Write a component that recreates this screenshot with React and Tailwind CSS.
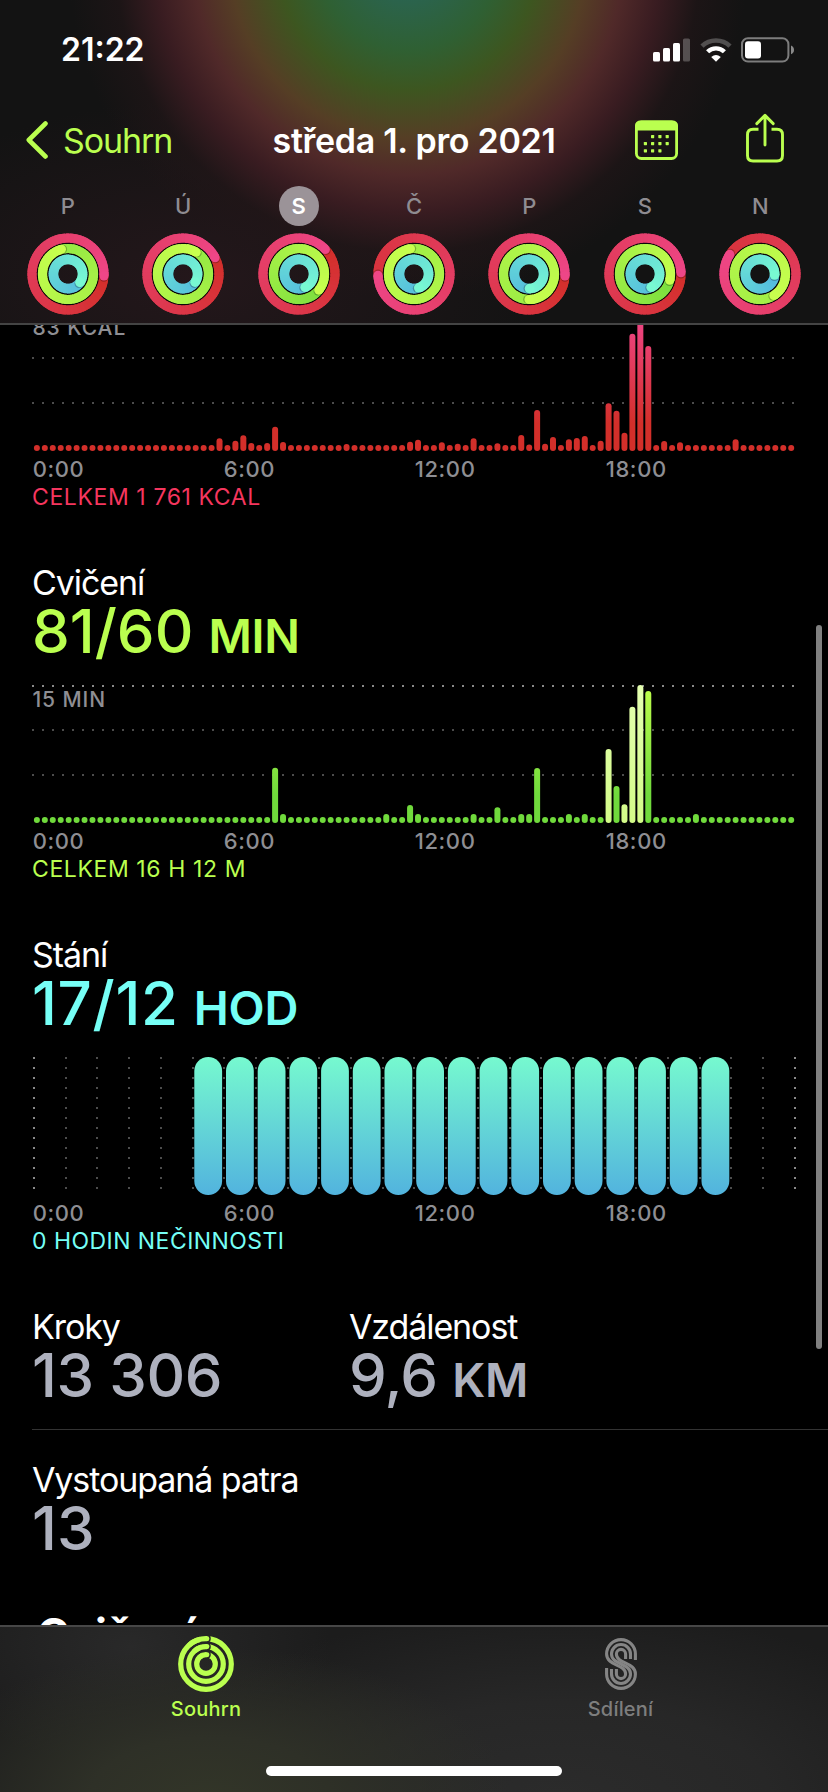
const BAR_COUNT = 96;
const BAR_STEP = 7.94;
const HOURS = ['0:00', '6:00', '12:00', '18:00'];

// quarter-hour index -> bar height, everything else is a resting dot
const MOVE = {
    23: 12.7, 25: 10.3, 26: 15.7, 27: 8, 29: 8, 30: 24.3, 31: 9, 39: 7, 47: 9.3, 48: 11.3,
    51: 8.7, 53: 7.3, 55: 12.7, 58: 7.7, 61: 16, 62: 6.5, 63: 41, 64: 7.3, 65: 14, 67: 11.7,
    68: 13, 69: 15, 71: 10.3, 72: 47.7, 73: 40.3, 74: 18.3, 75: 117.3, 76: 138, 77: 105,
    79: 10, 81: 8.7, 88: 11.7,
};

const EXERCISE = {
    30: 55.3, 31: 9, 44: 9, 47: 18, 48: 9, 55: 9, 58: 15.7, 61: 9, 62: 9, 63: 55, 67: 9, 69: 9,
    72: 74, 73: 37, 74: 18.7, 75: 116.3, 76: 138, 77: 132, 83: 9,
};

const WORKOUT = [72, 74, 75, 76];

const RED = [[211, 47, 42], [238, 70, 135]];
const GREEN = [[122, 222, 62], [200, 255, 78]];
const BLUE = [[82, 184, 222], [120, 249, 210]];

// every ring is [head angle, how far into the gradient the visible tail starts]
const WEEK = [
    { day: 'P', move: [93, 0], exercise: [345, 0.35], stand: [125, 0.1] },
    { day: 'Ú', move: [63, 0], exercise: [31, 0.35], stand: [124, 0.1] },
    { day: 'S', move: [47, 0], exercise: [129, 0.05], stand: [155, 0.1], selected: true },
    { day: 'Č', move: [268, 0.2], exercise: [352, 0.5], stand: [161, 0.1] },
    { day: 'P', move: [93, 0], exercise: [180, 0.45], stand: [178, 0.1] },
    { day: 'S', move: [88, 0], exercise: [104, 0], stand: [155, 0.1] },
    { day: 'N', move: [303, 0.2], exercise: [147, 0.5], stand: [94, 0] },
];

const mix = ([a, b], t) => `rgb(${a.map((v, i) => Math.round(v + (b[i] - v) * t)).join(',')})`;

const polar = (r, deg) => {
    const rad = (deg * Math.PI) / 180;
    return [r * Math.sin(rad), -r * Math.cos(rad)];
};

const arc = (r, from, to) => {
    const [x1, y1] = polar(r, from);
    const [x2, y2] = polar(r, to);
    return `M${x1} ${y1}A${r} ${r} 0 ${to - from > 180 ? 1 : 0} 1 ${x2} ${y2}`;
};

const Ring = ({ r, width, colors, head, start }) => {
    const segments = 60;
    const step = 360 / segments;
    const [sx, sy] = polar(r, head + 80 / r);
    const [hx, hy] = polar(r, head);
    return (
        <g fill="none" strokeWidth={width}>
            {Array.from({ length: segments }, (_, i) => (
                <path
                    key={i}
                    d={arc(r, head + i * step, head + (i + 1) * step + (i < segments - 1 ? 5 : 0))}
                    stroke={mix(colors, start + ((1 - start) * i) / segments)}
                />
            ))}
            <circle cx={sx} cy={sy} r={width / 2 - 0.2} fill="#000" fillOpacity="0.25" />
            <circle cx={hx} cy={hy} r={width / 2} fill={mix(colors, 1)} />
        </g>
    );
};

const ActivityRings = ({ move, exercise, stand }) => (
    <svg className="w-[82px] h-[82px]" viewBox="-41 -41 82 82">
        <circle r="31" fill="none" stroke="#0c0709" strokeWidth="2" />
        <circle r="20.3" fill="none" stroke="#0c0709" strokeWidth="2" />
        <Ring r={36} width={9.2} colors={RED} head={move[0]} start={move[1]} />
        <Ring r={25.5} width={9.2} colors={GREEN} head={exercise[0]} start={exercise[1]} />
        <Ring r={14.6} width={9.6} colors={BLUE} head={stand[0]} start={stand[1]} />
    </svg>
);

const StatusBar = () => (
    <div className="flex h-[99px] items-center justify-between pl-[61px] pr-[34px]">
        <span className="text-[32px] font-semibold">21:22</span>
        <div className="flex items-center gap-[10px]">
            <svg className="w-[37px] h-[24px]" viewBox="0 0 37 24" fill="#fff">
                <rect x="0" y="14" width="7" height="9.5" rx="1.6" />
                <rect x="10" y="10" width="7" height="13.5" rx="1.6" />
                <rect x="20" y="5" width="7" height="18.5" rx="1.6" />
                <rect x="30" y="0.5" width="7" height="23" rx="1.6" fillOpacity="0.25" />
            </svg>
            <svg className="w-[32px] h-[24px]" viewBox="0 0 32 24" fill="none" stroke="#fff">
                <path d="M2 8.2A20 20 0 0 1 30 8.2" strokeWidth="4.6" strokeOpacity="0.25" />
                <path d="M7.6 13.8A12 12 0 0 1 24.4 13.8" strokeWidth="4.4" />
                <path d="M16 23.8L11.2 19Q16 15 20.8 19Z" fill="#fff" stroke="none" />
            </svg>
            <svg className="w-[53px] h-[26px] -ml-px" viewBox="0 0 53 26" fill="none">
                <rect x="1" y="1.2" width="46.4" height="23.4" rx="6" stroke="#fff" strokeOpacity="0.45" strokeWidth="2" />
                <rect x="4" y="4.3" width="16" height="17.2" rx="3" fill="#fff" />
                <path d="M50 8.6Q53 10 53 13T50 17.2Z" fill="#fff" fillOpacity="0.5" />
            </svg>
        </div>
    </div>
);

const NavBar = () => (
    <nav className="grid h-[82px] grid-cols-[1fr_auto_1fr] items-center">
        <div className="flex items-center gap-[15px] pl-[26px] text-[#baff4f]">
            <svg className="w-[22px] h-[40px]" viewBox="0 0 22 40" fill="none" stroke="currentColor" strokeWidth="4.6" strokeLinecap="round" strokeLinejoin="round">
                <path d="M19.5 3.5L2.8 20L19.5 36.5" />
            </svg>
            <span className="text-[34px] tracking-[-1.1px]">Souhrn</span>
        </div>
        <h1 className="text-[34px] font-semibold tracking-[-0.3px] whitespace-nowrap">středa 1. pro 2021</h1>
        <div className="flex items-center justify-end gap-[68px] pr-[44px] text-[#baff4f]">
            <svg className="w-[43px] h-[40px]" viewBox="0 0 43 40" fill="none">
                <rect x="1.4" y="1.9" width="40.2" height="36.6" rx="5" stroke="currentColor" strokeWidth="2.8" />
                <path d="M0 10.5V6Q0 .5 6 .5H37Q43 .5 43 6V10.5Z" fill="currentColor" />
                <g fill="currentColor">
                    {[[16, 15], [23.3, 15], [30.6, 15], [8.8, 22], [16, 22], [23.3, 22], [30.6, 22], [8.8, 29.2], [16, 29.2], [23.3, 29.2]].map(([x, y]) => (
                        <rect key={`${x}-${y}`} x={x} y={y} width="3.2" height="3.2" rx="0.6" />
                    ))}
                </g>
            </svg>
            <svg className="w-[38px] h-[50px] -mt-1" viewBox="0 0 38 50" fill="none" stroke="currentColor" strokeWidth="2.9" strokeLinecap="round" strokeLinejoin="round">
                <path d="M12.5 16.3H7Q1.5 16.3 1.5 21.8V42.5Q1.5 48 7 48H31Q36.5 48 36.5 42.5V21.8Q36.5 16.3 31 16.3H25.5" strokeLinecap="butt" />
                <path d="M19 32V3M10.8 10.6L19 2.4L27.2 10.6" />
            </svg>
        </div>
    </nav>
);

const WeekStrip = () => (
    <div className="grid grid-cols-7 pl-[10px] pr-[10px] pt-[5px]">
        {WEEK.map(({ day, selected, ...rings }, i) => (
            <div key={i} className="flex flex-col items-center gap-[7px]">
                <span
                    className={
                        selected
                            ? 'flex h-10 w-10 items-center justify-center rounded-full bg-[#9b9398] text-[22px] font-semibold text-white'
                            : 'flex h-10 w-10 items-center justify-center text-[22px] font-medium text-[#8f8c91]'
                    }
                >
                    {day}
                </span>
                <ActivityRings {...rings} />
            </div>
        ))}
    </div>
);

const DottedRow = ({ y, color }) => (
    <path d={`M0 ${y}H764`} stroke={color} strokeWidth="2" strokeDasharray="2 8" />
);

const BarChart = ({ id, data, from, to, highlight = [], label }) => (
    <div className="relative h-[138px] w-[764px]">
        <svg className="h-[138px] w-[764px]" viewBox="0 0 764 138">
            <defs>
                <linearGradient id={id} gradientUnits="userSpaceOnUse" x1="0" y1="0" x2="0" y2="138">
                    <stop offset="0" stopColor={from} />
                    <stop offset="0.8" stopColor={to} />
                </linearGradient>
                <linearGradient id={`${id}-hl`} gradientUnits="userSpaceOnUse" x1="0" y1="0" x2="0" y2="138">
                    <stop offset="0" stopColor="#e4ffb0" />
                    <stop offset="1" stopColor="#d3fb88" />
                </linearGradient>
            </defs>
            <DottedRow y={1} color="#8a8a8a" />
            <DottedRow y={45} color="#4c4c4c" />
            <DottedRow y={90} color="#4c4c4c" />
            {Array.from({ length: BAR_COUNT }, (_, i) => {
                const h = data[i] || 6;
                return (
                    <rect
                        key={i}
                        x={1.9 + i * BAR_STEP}
                        y={138 - h}
                        width="6"
                        height={h}
                        rx="3"
                        fill={highlight.includes(i) ? `url(#${id}-hl)` : `url(#${id})`}
                    />
                );
            })}
        </svg>
        <span className="absolute left-[0.5px] top-0 text-[21px] leading-[29px] font-medium tracking-[0.9px] text-[#8e8e93]">{label}</span>
    </div>
);

const StandChart = () => (
    <svg className="h-[138px] w-[764px]" viewBox="0 0 764 138">
        <defs>
            <linearGradient id="stand" x1="0" y1="0" x2="0" y2="1">
                <stop offset="0" stopColor="#76f9cf" />
                <stop offset="1" stopColor="#52b3de" />
            </linearGradient>
        </defs>
        {Array.from({ length: 25 }, (_, i) => (
            <path
                key={i}
                d={`M${Math.round(2 + i * 31.7)} 0V138`}
                stroke={i % 24 === 0 ? '#8a8a8a' : '#4c4c4c'}
                strokeWidth="2"
                strokeDasharray="2 8"
            />
        ))}
        {Array.from({ length: 17 }, (_, i) => (
            <rect key={i} x={162.3 + i * 31.7} y="0" width="27.8" height="138" rx="13.9" fill="url(#stand)" />
        ))}
    </svg>
);

const HourAxis = () => (
    <div className="mt-1 ml-[0.7px] grid grid-cols-[repeat(4,191px)] text-[22px] leading-[28px] font-medium tracking-[0.6px] text-[#8e8e93]">
        {HOURS.map((hour) => (
            <span key={hour}>{hour}</span>
        ))}
    </div>
);

const Metric = ({ title, value, unit, className }) => (
    <div>
        <h2 className="text-[34px] leading-[42px] tracking-[-1.1px] text-white">{title}</h2>
        <p className={`h-[54px] text-[60px] leading-[54px] font-medium whitespace-nowrap ${className}`}>
            {value}
            {unit && <span className="ml-[15px] text-[47px] leading-none font-[560] tracking-[-0.2px]">{unit}</span>}
        </p>
    </div>
);

const SummaryIcon = () => (
    <svg className="h-[56px] w-[56px]" viewBox="-28 -28 56 56" fill="none">
        {[25.3, 17.3, 9.3].map((r) => (
            <g key={r}>
                <circle r={r} stroke="#baff4f" strokeWidth="5.2" />
                <path d={arc(r, -6, 45 / r)} stroke="#262724" strokeWidth="8" strokeLinecap="round" />
                <path d={arc(r, -40, 45 / r)} stroke="#baff4f" strokeWidth="5.2" strokeLinecap="round" />
            </g>
        ))}
    </svg>
);

const SharingIcon = () => (
    <svg className="h-[56px] w-[56px]" viewBox="-28 -28 56 56" fill="none" stroke="#858585" strokeWidth="3.1">
        <path d="M14.4 -4V-10A14.4 14.4 0 0 0 -14.4 -10C-14.4 2 4.6 0 4.6 10A4.6 4.6 0 0 1 -4.6 10V5" />
        <path d="M9.5 -5V-10A9.5 9.5 0 0 0 -9.5 -10C-9.5 1 9.5 -1 9.5 10A9.5 9.5 0 0 1 -9.5 10V5" />
        <path d="M4.6 -5V-10A4.6 4.6 0 0 0 -4.6 -10C-4.6 0 14.4 -2 14.4 10A14.4 14.4 0 0 1 -14.4 10V4" />
    </svg>
);

const TabBar = () => (
    <footer className="h-[167px] border-t-2 border-[#474747] bg-[#1c1c1c] bg-[radial-gradient(300px_150px_at_210px_170px,#323528_0%,#2e3027_40%,transparent_100%),radial-gradient(420px_190px_at_560px_170px,#2b2b2b_0%,#272727_50%,transparent_100%),radial-gradient(200px_120px_at_130px_20px,#292929_0%,transparent_100%)]">
        <div className="grid h-[139px] grid-cols-2 pt-[9px] text-[20px] leading-[24px] font-medium tracking-[0.2px]">
            <div className="flex flex-col items-center gap-[5px] pr-[2px] text-[#baff4f]">
                <SummaryIcon />
                Souhrn
            </div>
            <div className="flex flex-col items-center gap-[5px] pr-px text-[#7e7e7e]">
                <SharingIcon />
                Sdílení
            </div>
        </div>
        <div className="mx-auto h-[10px] w-[296px] rounded-full bg-white" />
    </footer>
);

const App = () => {
    return (
        <div className="relative flex h-[1792px] w-[828px] flex-col overflow-hidden bg-black font-['Inter','Liberation_Sans',sans-serif] text-white">
            <header className="h-[325px] shrink-0 border-b-2 border-[#444] bg-[#131313] bg-[radial-gradient(circle_at_408px_-40px,#2a6452_30px,#2f6033_90px,#3d5620_130px,#553e25_178px,#502929_215px,#391c21_252px,#22161899_292px,transparent_340px),radial-gradient(340px_180px_at_200px_280px,#24171b_0%,transparent_100%)]">
                <StatusBar />
                <NavBar />
                <WeekStrip />
            </header>

            <main className="flex-1 overflow-hidden pl-8">
                <section className="-mt-3">
                    <BarChart id="move" data={MOVE} from="#f0468a" to="#d32f2a" label="83 KCAL" />
                    <HourAxis />
                    <p className="text-[23px] leading-[28px] tracking-[0.6px] text-[#f5365e]">CELKEM 1 761 KCAL</p>
                </section>

                <section className="mt-[51px]">
                    <Metric title="Cvičení" value="81/60" unit="MIN" className="text-[#baff4f]" />
                    <div className="mt-[27px]">
                        <BarChart id="exercise" data={EXERCISE} highlight={WORKOUT} from="#c0ff4c" to="#70da3c" label="15 MIN" />
                    </div>
                    <HourAxis />
                    <p className="text-[23px] leading-[28px] tracking-[0.6px] text-[#baff4f]">CELKEM 16 H 12 M</p>
                </section>

                <section className="mt-[51px]">
                    <Metric title="Stání" value="17/12" unit="HOD" className="text-[#76fff6] tracking-[0.7px]" />
                    <div className="mt-[27px] h-[138px]">
                        <StandChart />
                    </div>
                    <HourAxis />
                    <p className="text-[23px] leading-[28px] tracking-[0.45px] text-[#76fff6]">0 HODIN NEČINNOSTI</p>
                </section>

                <section className="mt-[51px] grid h-[124px] grid-cols-[317px_1fr] border-b border-[#333]">
                    <Metric title="Kroky" value="13 306" className="text-[#aeb1be] tracking-[-0.4px]" />
                    <Metric title="Vzdálenost" value="9,6" unit="KM" className="text-[#aeb1be] tracking-[-0.8px]" />
                </section>

                <section className="mt-[29px]">
                    <Metric title="Vystoupaná patra" value="13" className="text-[#aeb1be]" />
                </section>

                <h2 className="mt-[51px] ml-[5px] text-[44px] leading-[56px] font-bold tracking-[-0.6px]">Cvičení</h2>
            </main>

            <TabBar />

            <div className="absolute top-[625px] right-[6px] h-[724px] w-[6px] rounded-full bg-[#808080]" />
        </div>
    );
};

export default App;
